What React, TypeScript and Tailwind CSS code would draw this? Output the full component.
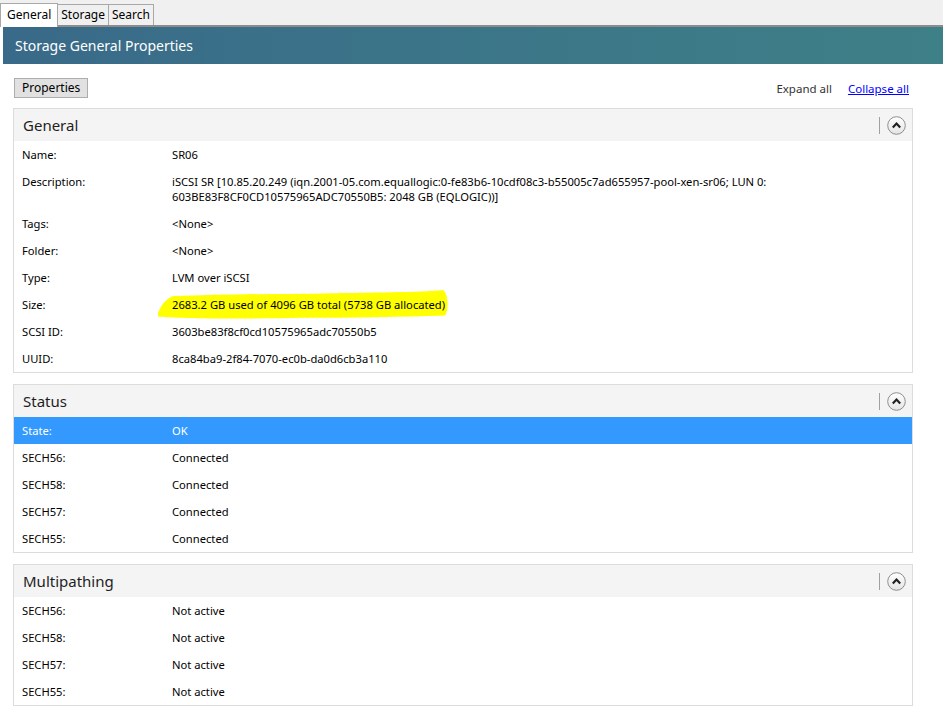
import { ReactNode } from 'react';

type TRow = {
  label: string;
  value: ReactNode;
  selected?: boolean;
};

const font = { fontFamily: '"Segoe UI", "Noto Sans", sans-serif' };

// freehand marker stroke drawn behind the size value
const Marker = ({ children }: { children: ReactNode }) => (
  <span className="relative inline-block">
    <svg
      className="absolute -left-[14px] top-[-7px] w-[calc(100%+18px)] h-[calc(100%+14px)]"
      viewBox="0 0 300 24"
      preserveAspectRatio="none"
    >
      <path
        d="M0 19 C 3 13, 8 7, 16 5 C 60 4, 110 3, 160 3 C 220 2, 270 2, 294 0 C 299 4, 300 15, 296 21 C 250 22, 200 23, 150 23 C 90 24, 30 24, 0 22 Z"
        fill="#ffff00"
      />
    </svg>
    <span className="relative">{children}</span>
  </span>
);

const generalRows: TRow[] = [
  { label: 'Name:', value: 'SR06' },
  {
    label: 'Description:',
    value: (
      <>
        iSCSI SR [10.85.20.249 (iqn.2001-05.com.equallogic:0-fe83b6-10cdf08c3-b55005c7ad655957-pool-xen-sr06; LUN 0:
        <br />
        603BE83F8CF0CD10575965ADC70550B5: 2048 GB (EQLOGIC))]
      </>
    ),
  },
  { label: 'Tags:', value: '<None>' },
  { label: 'Folder:', value: '<None>' },
  { label: 'Type:', value: 'LVM over iSCSI' },
  {
    label: 'Size:',
    value: <Marker>2683.2 GB used of 4096 GB total (5738 GB allocated)</Marker>,
  },
  { label: 'SCSI ID:', value: '3603be83f8cf0cd10575965adc70550b5' },
  { label: 'UUID:', value: '8ca84ba9-2f84-7070-ec0b-da0d6cb3a110' },
];

const statusRows: TRow[] = [
  { label: 'State:', value: 'OK', selected: true },
  { label: 'SECH56:', value: 'Connected' },
  { label: 'SECH58:', value: 'Connected' },
  { label: 'SECH57:', value: 'Connected' },
  { label: 'SECH55:', value: 'Connected' },
];

const multipathRows: TRow[] = [
  { label: 'SECH56:', value: 'Not active' },
  { label: 'SECH58:', value: 'Not active' },
  { label: 'SECH57:', value: 'Not active' },
  { label: 'SECH55:', value: 'Not active' },
];

const CollapseButton = () => (
  <div className="flex items-center gap-[7px]">
    <div className="w-px h-[17px] bg-[#a0a0a0]" />
    <svg width="19" height="19" viewBox="0 0 19 19">
      <defs>
        <linearGradient id="btnFill" x1="0" y1="0" x2="0" y2="1">
          <stop offset="0" stopColor="#ffffff" />
          <stop offset="1" stopColor="#e4e4e4" />
        </linearGradient>
      </defs>
      <circle cx="9.5" cy="9.5" r="8.8" fill="url(#btnFill)" stroke="#8e8e8e" strokeWidth="1" />
      <path d="M5.8 11.4 L9.5 7.6 L13.2 11.4" fill="none" stroke="#202020" strokeWidth="2.2" />
    </svg>
  </div>
);

const Section = ({ title, rows }: { title: string; rows: TRow[] }) => (
  <div className="border border-[#dcdcdc] bg-white">
    <div className="h-[32px] bg-[#f4f4f4] flex items-center justify-between pl-[9px] pr-[6px]">
      <span className="text-[15px] text-[#1e1e1e]">{title}</span>
      <CollapseButton />
    </div>
    <div>
      {rows.map((row, index) => (
        <div
          key={index}
          className={
            row.selected
              ? 'flex min-h-[27px] py-[6px] leading-[15px] text-[11.2px] bg-[#3399ff] text-white'
              : 'flex min-h-[27px] py-[6px] leading-[15px] text-[11.2px] text-[#000000]'
          }
        >
          <div className="w-[158px] shrink-0 pl-[8px]">{row.label}</div>
          <div>{row.value}</div>
        </div>
      ))}
    </div>
  </div>
);

export default function App() {
  return (
    <div className="w-[943px] h-[722px] bg-white overflow-hidden" style={font}>
      {/* tab strip */}
      <div className="h-[27px] bg-[#f0f0f0] border-b-2 border-[#8c8c8c]">
        <div className="flex items-end h-full text-[12px]">
          <div className="h-[24px] px-[6px] pt-[2px] bg-white border border-b-0 border-[#a8a8a8] relative top-[2px] z-10">
            General
          </div>
          <div className="h-[21px] px-[3px] pt-[1px] bg-[#f0f0f0] border border-b-0 border-l-0 border-[#a8a8a8]">
            Storage
          </div>
          <div className="h-[21px] px-[3px] pt-[1px] bg-[#f0f0f0] border border-b-0 border-l-0 border-[#a8a8a8]">
            Search
          </div>
        </div>
      </div>

      {/* banner */}
      <div className="ml-[3px] h-[37px] flex items-center pl-[12px] bg-gradient-to-r from-[#396a89] to-[#3e8087]">
        <span className="text-white text-[14px]">Storage General Properties</span>
      </div>

      <div className="px-[13px] pt-[14px] pr-[30px]">
        <div className="flex items-center justify-between">
          <button className="ml-[1px] h-[20px] px-[7px] text-[12px] leading-[18px] bg-[#e1e1e1] border border-[#adadad]">
            Properties
          </button>
          <div className="flex gap-[16px] text-[11.5px] pr-[4px] pt-[2px]">
            <span className="text-[#333333]">Expand all</span>
            <span className="text-[#0000ff] underline">Collapse all</span>
          </div>
        </div>

        <div className="mt-[10px] flex flex-col gap-[11px]">
          <Section title="General" rows={generalRows} />
          <Section title="Status" rows={statusRows} />
          <Section title="Multipathing" rows={multipathRows} />
        </div>
      </div>
    </div>
  );
}
